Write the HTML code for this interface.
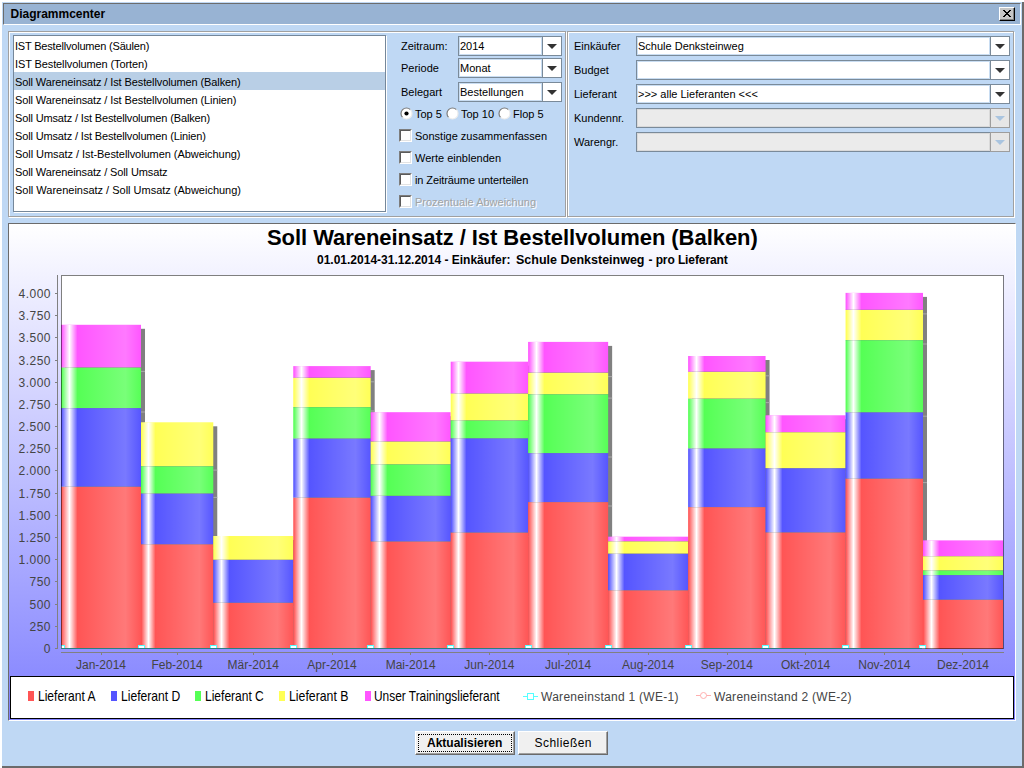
<!DOCTYPE html>
<html><head><meta charset="utf-8">
<style>
html,body{margin:0;padding:0;}
body{width:1024px;height:768px;position:relative;overflow:hidden;background:#fff;font-family:"Liberation Sans", sans-serif;}
.a{position:absolute;}
.t{position:absolute;white-space:pre;font-size:11px;color:#000;line-height:13px;}
.u{margin-top:1px;}
.gb{position:absolute;box-sizing:border-box;border:1px solid #a0a0a0;box-shadow:inset 1px 1px 0 #fff, 1px 1px 0 #fff;}
.combo{position:absolute;height:18px;border:1px solid #7a8a99;background:#fff;}
.combo .btn{position:absolute;right:0;top:0;width:18px;height:18px;border-left:1px solid #7a8a99;background:#fff;}
.combo .arr{position:absolute;left:4px;top:7px;width:0;height:0;border-left:5px solid transparent;border-right:5px solid transparent;border-top:5px solid #333;}
.combo.dis{background:#ebebeb;}
.combo.dis .btn{background:#e6e6e6;top:-1px;right:-1px;border:1px solid #9d9d9d;}
.combo.dis .arr{border-top-color:#a9c4df;}
.cb{position:absolute;width:13px;height:13px;box-sizing:border-box;background:#fff;border-top:1px solid #7d7d7d;border-left:1px solid #7d7d7d;border-right:1px solid #fff;border-bottom:1px solid #fff;}
.cb::after{content:"";position:absolute;left:0;top:0;width:10px;height:10px;border-top:1px solid #5a5a5a;border-left:1px solid #5a5a5a;border-right:1px solid #e3e3e3;border-bottom:1px solid #e3e3e3;}
.cb::after{box-sizing:border-box;width:11px;height:11px;}
</style></head><body>
<div class="a" style="left:2px;top:2px;width:1020px;height:764px;background:#bfd8f4;"></div><div class="a" style="left:1022px;top:2px;width:2px;height:766px;background:#6b6b6b;"></div><div class="a" style="left:2px;top:766px;width:1022px;height:2px;background:#6b6b6b;"></div><div class="a" style="left:3px;top:3px;width:1018px;height:22px;box-sizing:border-box;background:#98b3d3;border-top:1px solid #6c6c6c;border-left:1px solid #6c6c6c;border-right:1px solid #fff;border-bottom:1px solid #fff;"></div><div class="t u" style="left:10.5px;top:6px;font-size:12px;font-weight:bold;line-height:14px;">Diagrammcenter</div><div class="a" style="left:999px;top:7px;width:16px;height:14px;box-sizing:border-box;background:#c6c6c6;border-top:1px solid #fff;border-left:1px solid #fff;border-right:1px solid #000;border-bottom:1px solid #000;"></div><svg class="a" style="left:999px;top:7px" width="16" height="14" shape-rendering="crispEdges"><rect x="14" y="1" width="1" height="12" fill="#808080"/><rect x="1" y="12" width="14" height="1" fill="#808080"/><g fill="#000"><rect x="4" y="3" width="1" height="1"/><rect x="5" y="3" width="1" height="1"/><rect x="10" y="3" width="1" height="1"/><rect x="11" y="3" width="1" height="1"/><rect x="5" y="4" width="1" height="1"/><rect x="6" y="4" width="1" height="1"/><rect x="9" y="4" width="1" height="1"/><rect x="10" y="4" width="1" height="1"/><rect x="6" y="5" width="1" height="1"/><rect x="7" y="5" width="1" height="1"/><rect x="8" y="5" width="1" height="1"/><rect x="9" y="5" width="1" height="1"/><rect x="7" y="6" width="1" height="1"/><rect x="8" y="6" width="1" height="1"/><rect x="6" y="7" width="1" height="1"/><rect x="7" y="7" width="1" height="1"/><rect x="8" y="7" width="1" height="1"/><rect x="9" y="7" width="1" height="1"/><rect x="5" y="8" width="1" height="1"/><rect x="6" y="8" width="1" height="1"/><rect x="9" y="8" width="1" height="1"/><rect x="10" y="8" width="1" height="1"/><rect x="4" y="9" width="1" height="1"/><rect x="5" y="9" width="1" height="1"/><rect x="10" y="9" width="1" height="1"/><rect x="11" y="9" width="1" height="1"/></g></svg><div class="gb" style="left:8px;top:31px;width:558px;height:186px;"></div><div class="gb" style="left:567px;top:31px;width:447px;height:186px;"></div><div class="a" style="left:13px;top:35px;width:373px;height:177px;box-sizing:border-box;background:#fff;border:1px solid #75879a;box-shadow:1px 1px 0 #fff;"></div><div class="t u" style="left:15px;top:39px;letter-spacing:-0.188px;">IST Bestellvolumen (Säulen)</div><div class="t u" style="left:15px;top:57px;letter-spacing:-0.112px;">IST Bestellvolumen (Torten)</div><div class="a" style="left:14px;top:72px;width:371px;height:18px;background:#b9cfe6;"></div><div class="t u" style="left:15px;top:75px;letter-spacing:-0.107px;">Soll Wareneinsatz / Ist Bestellvolumen (Balken)</div><div class="t u" style="left:15px;top:93px;letter-spacing:-0.107px;">Soll Wareneinsatz / Ist Bestellvolumen (Linien)</div><div class="t u" style="left:15px;top:111px;letter-spacing:-0.15px;">Soll Umsatz / Ist Bestellvolumen (Balken)</div><div class="t u" style="left:15px;top:129px;letter-spacing:-0.15px;">Soll Umsatz / Ist Bestellvolumen (Linien)</div><div class="t u" style="left:15px;top:147px;letter-spacing:-0.059px;">Soll Umsatz / Ist-Bestellvolumen (Abweichung)</div><div class="t u" style="left:15px;top:165px;letter-spacing:-0.117px;">Soll Wareneinsatz / Soll Umsatz</div><div class="t u" style="left:15px;top:183px;letter-spacing:-0.01px;">Soll Wareneinsatz / Soll Umsatz (Abweichung)</div><div class="t u" style="left:401px;top:39px;">Zeitraum:</div><div class="t u" style="left:401px;top:61px;">Periode</div><div class="t u" style="left:401px;top:85px;">Belegart</div><div class="combo" style="left:458px;top:36px;width:102px;"><div class="a" style="left:0;top:0;width:83px;height:18px;box-shadow:inset 0 0 0 1px #c9ddf2;"></div><div class="btn"><div class="arr"></div></div><div class="t u" style="left:1px;top:2px;">2014</div></div><div class="combo" style="left:458px;top:58px;width:102px;"><div class="a" style="left:0;top:0;width:83px;height:18px;box-shadow:inset 0 0 0 1px #c9ddf2;"></div><div class="btn"><div class="arr"></div></div><div class="t u" style="left:1px;top:2px;">Monat</div></div><div class="combo" style="left:458px;top:82px;width:102px;"><div class="a" style="left:0;top:0;width:83px;height:18px;box-shadow:inset 0 0 0 1px #c9ddf2;"></div><div class="btn"><div class="arr"></div></div><div class="t u" style="left:1px;top:2px;">Bestellungen</div></div><svg class="a" style="left:400px;top:106.5px" width="13" height="13"><circle cx="6.5" cy="6.5" r="5.5" fill="#fff"/><path d="M2.61 10.39 A5.5 5.5 0 0 1 10.39 2.61" fill="none" stroke="#7d7d7d" stroke-width="1.2"/><path d="M10.39 2.61 A5.5 5.5 0 0 1 2.61 10.39" fill="none" stroke="#ececec" stroke-width="1.2"/><circle cx="6.5" cy="6.5" r="2.1" fill="#000"/></svg><div class="t u" style="left:415px;top:107px;">Top 5</div><svg class="a" style="left:446px;top:106.5px" width="13" height="13"><circle cx="6.5" cy="6.5" r="5.5" fill="#fff"/><path d="M2.61 10.39 A5.5 5.5 0 0 1 10.39 2.61" fill="none" stroke="#7d7d7d" stroke-width="1.2"/><path d="M10.39 2.61 A5.5 5.5 0 0 1 2.61 10.39" fill="none" stroke="#ececec" stroke-width="1.2"/></svg><div class="t u" style="left:461px;top:107px;">Top 10</div><svg class="a" style="left:498px;top:106.5px" width="13" height="13"><circle cx="6.5" cy="6.5" r="5.5" fill="#fff"/><path d="M2.61 10.39 A5.5 5.5 0 0 1 10.39 2.61" fill="none" stroke="#7d7d7d" stroke-width="1.2"/><path d="M10.39 2.61 A5.5 5.5 0 0 1 2.61 10.39" fill="none" stroke="#ececec" stroke-width="1.2"/></svg><div class="t u" style="left:513px;top:107px;">Flop 5</div><div class="cb" style="left:399px;top:129px;"></div><div class="t u" style="left:415px;top:129px;">Sonstige zusammenfassen</div><div class="cb" style="left:399px;top:151px;"></div><div class="t u" style="left:415px;top:151px;">Werte einblenden</div><div class="cb" style="left:399px;top:173px;"></div><div class="t u" style="left:415px;top:173px;letter-spacing:-0.1px;">in Zeiträume unterteilen</div><div class="cb" style="left:399px;top:195px;"></div><div class="t u" style="left:416px;top:196px;color:#fff;">Prozentuale Abweichung</div><div class="t u" style="left:415px;top:195px;color:#a3a3a3;">Prozentuale Abweichung</div><div class="t u" style="left:574px;top:39px;">Einkäufer</div><div class="t u" style="left:574px;top:63px;">Budget</div><div class="t u" style="left:574px;top:87px;">Lieferant</div><div class="t u" style="left:574px;top:111px;">Kundennr.</div><div class="t u" style="left:574px;top:135px;">Warengr.</div><div class="combo" style="left:636px;top:36px;width:372px;"><div class="a" style="left:0;top:0;width:353px;height:18px;box-shadow:inset 0 0 0 1px #c9ddf2;"></div><div class="btn"><div class="arr"></div></div><div class="t u" style="left:1px;top:2px;">Schule Denksteinweg</div></div><div class="combo" style="left:636px;top:60px;width:372px;"><div class="a" style="left:0;top:0;width:353px;height:18px;box-shadow:inset 0 0 0 1px #c9ddf2;"></div><div class="btn"><div class="arr"></div></div></div><div class="combo" style="left:636px;top:84px;width:372px;"><div class="a" style="left:0;top:0;width:353px;height:18px;box-shadow:inset 0 0 0 1px #c9ddf2;"></div><div class="btn"><div class="arr"></div></div><div class="t u" style="left:1px;top:2px;">&gt;&gt;&gt; alle Lieferanten &lt;&lt;&lt;</div></div><div class="combo dis" style="left:636px;top:108px;width:372px;"><div class="a" style="left:0;top:0;width:353px;height:18px;box-shadow:inset 0 0 0 1px #d9d9d9;"></div><div class="btn"><div class="arr"></div></div></div><div class="combo dis" style="left:636px;top:132px;width:372px;"><div class="a" style="left:0;top:0;width:353px;height:18px;box-shadow:inset 0 0 0 1px #d9d9d9;"></div><div class="btn"><div class="arr"></div></div></div><div class="a" style="left:8px;top:223px;width:1008px;height:498px;box-sizing:border-box;border-top:1px solid #6b6b6b;border-left:1px solid #6b6b6b;border-right:1px solid #fff;border-bottom:1px solid #fff;background:linear-gradient(to bottom,#ffffff 0px,#0000ff 1000px);"></div><div class="t" style="left:267px;top:226px;font-size:22px;font-weight:bold;line-height:24px;letter-spacing:-0.05px;">Soll Wareneinsatz / Ist Bestellvolumen (Balken)</div><div class="t" style="left:317px;top:253px;font-size:12px;font-weight:bold;line-height:14px;">01.01.2014-31.12.2014 - Einkäufer:</div><div class="t" style="left:516px;top:253px;font-size:12.5px;font-weight:bold;line-height:14px;">Schule Denksteinweg</div><div class="t" style="left:648.5px;top:253px;font-size:12px;font-weight:bold;line-height:14px;letter-spacing:-0.1px;">- pro Lieferant</div><svg class="a" style="left:0;top:0" width="1024" height="768" viewBox="0 0 1024 768"><defs><linearGradient id="hl0" gradientUnits="userSpaceOnUse" x1="61.500" y1="0" x2="141.505" y2="0"><stop offset="0" stop-color="#fff" stop-opacity="0"/><stop offset="0.1000" stop-color="#fff" stop-opacity="1"/><stop offset="0.2000" stop-color="#fff" stop-opacity="0"/><stop offset="0.7999" stop-color="#fff" stop-opacity="0.2118"/><stop offset="1" stop-color="#fff" stop-opacity="0"/></linearGradient><linearGradient id="hl1" gradientUnits="userSpaceOnUse" x1="141.505" y1="0" x2="213.768" y2="0"><stop offset="0" stop-color="#fff" stop-opacity="0"/><stop offset="0.0968" stop-color="#fff" stop-opacity="1"/><stop offset="0.1937" stop-color="#fff" stop-opacity="0"/><stop offset="0.8025" stop-color="#fff" stop-opacity="0.2118"/><stop offset="1" stop-color="#fff" stop-opacity="0"/></linearGradient><linearGradient id="hl2" gradientUnits="userSpaceOnUse" x1="213.768" y1="0" x2="293.774" y2="0"><stop offset="0" stop-color="#fff" stop-opacity="0"/><stop offset="0.0966" stop-color="#fff" stop-opacity="1"/><stop offset="0.1966" stop-color="#fff" stop-opacity="0"/><stop offset="0.7966" stop-color="#fff" stop-opacity="0.2118"/><stop offset="1" stop-color="#fff" stop-opacity="0"/></linearGradient><linearGradient id="hl3" gradientUnits="userSpaceOnUse" x1="293.774" y1="0" x2="371.199" y2="0"><stop offset="0" stop-color="#fff" stop-opacity="0"/><stop offset="0.0998" stop-color="#fff" stop-opacity="1"/><stop offset="0.2031" stop-color="#fff" stop-opacity="0"/><stop offset="0.7972" stop-color="#fff" stop-opacity="0.2118"/><stop offset="1" stop-color="#fff" stop-opacity="0"/></linearGradient><linearGradient id="hl4" gradientUnits="userSpaceOnUse" x1="371.199" y1="0" x2="451.204" y2="0"><stop offset="0" stop-color="#fff" stop-opacity="0"/><stop offset="0.1038" stop-color="#fff" stop-opacity="1"/><stop offset="0.2038" stop-color="#fff" stop-opacity="0"/><stop offset="0.8037" stop-color="#fff" stop-opacity="0.2118"/><stop offset="1" stop-color="#fff" stop-opacity="0"/></linearGradient><linearGradient id="hl5" gradientUnits="userSpaceOnUse" x1="451.204" y1="0" x2="528.629" y2="0"><stop offset="0" stop-color="#fff" stop-opacity="0"/><stop offset="0.0942" stop-color="#fff" stop-opacity="1"/><stop offset="0.1976" stop-color="#fff" stop-opacity="0"/><stop offset="0.8046" stop-color="#fff" stop-opacity="0.2118"/><stop offset="1" stop-color="#fff" stop-opacity="0"/></linearGradient><linearGradient id="hl6" gradientUnits="userSpaceOnUse" x1="528.629" y1="0" x2="608.634" y2="0"><stop offset="0" stop-color="#fff" stop-opacity="0"/><stop offset="0.0984" stop-color="#fff" stop-opacity="1"/><stop offset="0.1984" stop-color="#fff" stop-opacity="0"/><stop offset="0.7983" stop-color="#fff" stop-opacity="0.2118"/><stop offset="1" stop-color="#fff" stop-opacity="0"/></linearGradient><linearGradient id="hl7" gradientUnits="userSpaceOnUse" x1="608.634" y1="0" x2="688.640" y2="0"><stop offset="0" stop-color="#fff" stop-opacity="0"/><stop offset="0.0983" stop-color="#fff" stop-opacity="1"/><stop offset="0.1983" stop-color="#fff" stop-opacity="0"/><stop offset="0.7983" stop-color="#fff" stop-opacity="0.2118"/><stop offset="1" stop-color="#fff" stop-opacity="0"/></linearGradient><linearGradient id="hl8" gradientUnits="userSpaceOnUse" x1="688.640" y1="0" x2="766.064" y2="0"><stop offset="0" stop-color="#fff" stop-opacity="0"/><stop offset="0.1015" stop-color="#fff" stop-opacity="1"/><stop offset="0.2048" stop-color="#fff" stop-opacity="0"/><stop offset="0.7990" stop-color="#fff" stop-opacity="0.2118"/><stop offset="1" stop-color="#fff" stop-opacity="0"/></linearGradient><linearGradient id="hl9" gradientUnits="userSpaceOnUse" x1="766.064" y1="0" x2="846.070" y2="0"><stop offset="0" stop-color="#fff" stop-opacity="0"/><stop offset="0.1054" stop-color="#fff" stop-opacity="1"/><stop offset="0.2054" stop-color="#fff" stop-opacity="0"/><stop offset="0.8054" stop-color="#fff" stop-opacity="0.2118"/><stop offset="1" stop-color="#fff" stop-opacity="0"/></linearGradient><linearGradient id="hl10" gradientUnits="userSpaceOnUse" x1="846.070" y1="0" x2="923.495" y2="0"><stop offset="0" stop-color="#fff" stop-opacity="0"/><stop offset="0.0960" stop-color="#fff" stop-opacity="1"/><stop offset="0.1993" stop-color="#fff" stop-opacity="0"/><stop offset="0.8063" stop-color="#fff" stop-opacity="0.2118"/><stop offset="1" stop-color="#fff" stop-opacity="0"/></linearGradient><linearGradient id="hl11" gradientUnits="userSpaceOnUse" x1="923.495" y1="0" x2="1003.500" y2="0"><stop offset="0" stop-color="#fff" stop-opacity="0"/><stop offset="0.1001" stop-color="#fff" stop-opacity="1"/><stop offset="0.2001" stop-color="#fff" stop-opacity="0"/><stop offset="0.8000" stop-color="#fff" stop-opacity="0.2118"/><stop offset="1" stop-color="#fff" stop-opacity="0"/></linearGradient></defs><rect x="61" y="275" width="942" height="373" fill="#fff"/><clipPath id="pc0"><rect x="61" y="275" width="942" height="374"/></clipPath><g clip-path="url(#pc0)"><rect x="65.00" y="328.80" width="80.01" height="320.20" fill="#808080"/><rect x="145.01" y="426.30" width="72.26" height="222.70" fill="#808080"/><rect x="217.27" y="540.00" width="80.01" height="109.00" fill="#808080"/><rect x="297.27" y="370.10" width="77.42" height="278.90" fill="#808080"/><rect x="374.70" y="416.20" width="80.01" height="232.80" fill="#808080"/><rect x="454.70" y="365.70" width="77.42" height="283.30" fill="#808080"/><rect x="532.13" y="345.90" width="80.01" height="303.10" fill="#808080"/><rect x="612.13" y="540.70" width="80.01" height="108.30" fill="#808080"/><rect x="692.14" y="360.00" width="77.42" height="289.00" fill="#808080"/><rect x="769.56" y="419.30" width="80.01" height="229.70" fill="#808080"/><rect x="849.57" y="296.90" width="77.42" height="352.10" fill="#808080"/><rect x="926.99" y="544.40" width="80.01" height="104.60" fill="#808080"/><rect x="141.01" y="370.90" width="4" height="1" fill="#a9a9a9"/><rect x="141.01" y="411.50" width="4" height="1" fill="#a9a9a9"/><rect x="141.01" y="490.20" width="4" height="1" fill="#a9a9a9"/><rect x="213.27" y="469.60" width="4" height="1" fill="#a9a9a9"/><rect x="213.27" y="496.90" width="4" height="1" fill="#a9a9a9"/><rect x="213.27" y="547.70" width="4" height="1" fill="#a9a9a9"/><rect x="293.27" y="563.30" width="4" height="1" fill="#a9a9a9"/><rect x="293.27" y="606.30" width="4" height="1" fill="#a9a9a9"/><rect x="370.70" y="381.30" width="4" height="1" fill="#a9a9a9"/><rect x="370.70" y="410.50" width="4" height="1" fill="#a9a9a9"/><rect x="370.70" y="441.90" width="4" height="1" fill="#a9a9a9"/><rect x="370.70" y="501.10" width="4" height="1" fill="#a9a9a9"/><rect x="450.70" y="444.90" width="4" height="1" fill="#a9a9a9"/><rect x="450.70" y="467.70" width="4" height="1" fill="#a9a9a9"/><rect x="450.70" y="499.40" width="4" height="1" fill="#a9a9a9"/><rect x="450.70" y="544.90" width="4" height="1" fill="#a9a9a9"/><rect x="528.13" y="396.90" width="4" height="1" fill="#a9a9a9"/><rect x="528.13" y="423.80" width="4" height="1" fill="#a9a9a9"/><rect x="528.13" y="441.70" width="4" height="1" fill="#a9a9a9"/><rect x="528.13" y="536.00" width="4" height="1" fill="#a9a9a9"/><rect x="608.13" y="376.10" width="4" height="1" fill="#a9a9a9"/><rect x="608.13" y="397.60" width="4" height="1" fill="#a9a9a9"/><rect x="608.13" y="456.50" width="4" height="1" fill="#a9a9a9"/><rect x="608.13" y="505.50" width="4" height="1" fill="#a9a9a9"/><rect x="688.14" y="544.70" width="4" height="1" fill="#a9a9a9"/><rect x="688.14" y="557.10" width="4" height="1" fill="#a9a9a9"/><rect x="688.14" y="593.70" width="4" height="1" fill="#a9a9a9"/><rect x="765.56" y="375.30" width="4" height="1" fill="#a9a9a9"/><rect x="765.56" y="402.10" width="4" height="1" fill="#a9a9a9"/><rect x="765.56" y="451.80" width="4" height="1" fill="#a9a9a9"/><rect x="765.56" y="510.50" width="4" height="1" fill="#a9a9a9"/><rect x="845.57" y="435.60" width="4" height="1" fill="#a9a9a9"/><rect x="845.57" y="471.60" width="4" height="1" fill="#a9a9a9"/><rect x="845.57" y="535.80" width="4" height="1" fill="#a9a9a9"/><rect x="922.99" y="313.40" width="4" height="1" fill="#a9a9a9"/><rect x="922.99" y="343.50" width="4" height="1" fill="#a9a9a9"/><rect x="922.99" y="415.70" width="4" height="1" fill="#a9a9a9"/><rect x="922.99" y="482.10" width="4" height="1" fill="#a9a9a9"/><rect x="1003.00" y="559.60" width="4" height="1" fill="#a9a9a9"/><rect x="1003.00" y="573.80" width="4" height="1" fill="#a9a9a9"/><rect x="1003.00" y="578.50" width="4" height="1" fill="#a9a9a9"/><rect x="1003.00" y="603.20" width="4" height="1" fill="#a9a9a9"/><rect x="61.00" y="486.70" width="80.01" height="162.30" fill="#ff5555"/><rect x="61.00" y="408.00" width="80.01" height="78.70" fill="#5555ff"/><rect x="61.00" y="367.40" width="80.01" height="40.60" fill="#55ff55"/><rect x="61.00" y="324.80" width="80.01" height="42.60" fill="#ff55ff"/><rect x="61.00" y="324.80" width="80.01" height="324.20" fill="url(#hl0)"/><rect x="61.00" y="486" width="80.01" height="1" fill="#808080" fill-opacity="0.22"/><rect x="61.00" y="408" width="80.01" height="1" fill="#808080" fill-opacity="0.22"/><rect x="61.00" y="367" width="80.01" height="1" fill="#808080" fill-opacity="0.22"/><rect x="141.01" y="544.20" width="72.26" height="104.80" fill="#ff5555"/><rect x="141.01" y="493.40" width="72.26" height="50.80" fill="#5555ff"/><rect x="141.01" y="466.10" width="72.26" height="27.30" fill="#55ff55"/><rect x="141.01" y="422.30" width="72.26" height="43.80" fill="#ffff55"/><rect x="141.01" y="422.30" width="72.26" height="226.70" fill="url(#hl1)"/><rect x="141.01" y="544" width="72.26" height="1" fill="#808080" fill-opacity="0.22"/><rect x="141.01" y="493" width="72.26" height="1" fill="#808080" fill-opacity="0.22"/><rect x="141.01" y="466" width="72.26" height="1" fill="#808080" fill-opacity="0.22"/><rect x="213.27" y="602.80" width="80.01" height="46.20" fill="#ff5555"/><rect x="213.27" y="559.80" width="80.01" height="43.00" fill="#5555ff"/><rect x="213.27" y="536.00" width="80.01" height="23.80" fill="#ffff55"/><rect x="213.27" y="536.00" width="80.01" height="113.00" fill="url(#hl2)"/><rect x="213.27" y="602" width="80.01" height="1" fill="#808080" fill-opacity="0.22"/><rect x="213.27" y="559" width="80.01" height="1" fill="#808080" fill-opacity="0.22"/><rect x="293.27" y="497.60" width="77.42" height="151.40" fill="#ff5555"/><rect x="293.27" y="438.40" width="77.42" height="59.20" fill="#5555ff"/><rect x="293.27" y="407.00" width="77.42" height="31.40" fill="#55ff55"/><rect x="293.27" y="377.80" width="77.42" height="29.20" fill="#ffff55"/><rect x="293.27" y="366.10" width="77.42" height="11.70" fill="#ff55ff"/><rect x="293.27" y="366.10" width="77.42" height="282.90" fill="url(#hl3)"/><rect x="293.27" y="497" width="77.42" height="1" fill="#808080" fill-opacity="0.22"/><rect x="293.27" y="438" width="77.42" height="1" fill="#808080" fill-opacity="0.22"/><rect x="293.27" y="407" width="77.42" height="1" fill="#808080" fill-opacity="0.22"/><rect x="293.27" y="377" width="77.42" height="1" fill="#808080" fill-opacity="0.22"/><rect x="370.70" y="541.40" width="80.01" height="107.60" fill="#ff5555"/><rect x="370.70" y="495.90" width="80.01" height="45.50" fill="#5555ff"/><rect x="370.70" y="464.20" width="80.01" height="31.70" fill="#55ff55"/><rect x="370.70" y="441.40" width="80.01" height="22.80" fill="#ffff55"/><rect x="370.70" y="412.20" width="80.01" height="29.20" fill="#ff55ff"/><rect x="370.70" y="412.20" width="80.01" height="236.80" fill="url(#hl4)"/><rect x="370.70" y="541" width="80.01" height="1" fill="#808080" fill-opacity="0.22"/><rect x="370.70" y="495" width="80.01" height="1" fill="#808080" fill-opacity="0.22"/><rect x="370.70" y="464" width="80.01" height="1" fill="#808080" fill-opacity="0.22"/><rect x="370.70" y="441" width="80.01" height="1" fill="#808080" fill-opacity="0.22"/><rect x="450.70" y="532.50" width="77.42" height="116.50" fill="#ff5555"/><rect x="450.70" y="438.20" width="77.42" height="94.30" fill="#5555ff"/><rect x="450.70" y="420.30" width="77.42" height="17.90" fill="#55ff55"/><rect x="450.70" y="393.40" width="77.42" height="26.90" fill="#ffff55"/><rect x="450.70" y="361.70" width="77.42" height="31.70" fill="#ff55ff"/><rect x="450.70" y="361.70" width="77.42" height="287.30" fill="url(#hl5)"/><rect x="450.70" y="532" width="77.42" height="1" fill="#808080" fill-opacity="0.22"/><rect x="450.70" y="438" width="77.42" height="1" fill="#808080" fill-opacity="0.22"/><rect x="450.70" y="420" width="77.42" height="1" fill="#808080" fill-opacity="0.22"/><rect x="450.70" y="393" width="77.42" height="1" fill="#808080" fill-opacity="0.22"/><rect x="528.13" y="502.00" width="80.01" height="147.00" fill="#ff5555"/><rect x="528.13" y="453.00" width="80.01" height="49.00" fill="#5555ff"/><rect x="528.13" y="394.10" width="80.01" height="58.90" fill="#55ff55"/><rect x="528.13" y="372.60" width="80.01" height="21.50" fill="#ffff55"/><rect x="528.13" y="341.90" width="80.01" height="30.70" fill="#ff55ff"/><rect x="528.13" y="341.90" width="80.01" height="307.10" fill="url(#hl6)"/><rect x="528.13" y="502" width="80.01" height="1" fill="#808080" fill-opacity="0.22"/><rect x="528.13" y="453" width="80.01" height="1" fill="#808080" fill-opacity="0.22"/><rect x="528.13" y="394" width="80.01" height="1" fill="#808080" fill-opacity="0.22"/><rect x="528.13" y="372" width="80.01" height="1" fill="#808080" fill-opacity="0.22"/><rect x="608.13" y="590.20" width="80.01" height="58.80" fill="#ff5555"/><rect x="608.13" y="553.60" width="80.01" height="36.60" fill="#5555ff"/><rect x="608.13" y="541.20" width="80.01" height="12.40" fill="#ffff55"/><rect x="608.13" y="536.70" width="80.01" height="4.50" fill="#ff55ff"/><rect x="608.13" y="536.70" width="80.01" height="112.30" fill="url(#hl7)"/><rect x="608.13" y="590" width="80.01" height="1" fill="#808080" fill-opacity="0.22"/><rect x="608.13" y="553" width="80.01" height="1" fill="#808080" fill-opacity="0.22"/><rect x="608.13" y="541" width="80.01" height="1" fill="#808080" fill-opacity="0.22"/><rect x="688.14" y="507.00" width="77.42" height="142.00" fill="#ff5555"/><rect x="688.14" y="448.30" width="77.42" height="58.70" fill="#5555ff"/><rect x="688.14" y="398.60" width="77.42" height="49.70" fill="#55ff55"/><rect x="688.14" y="371.80" width="77.42" height="26.80" fill="#ffff55"/><rect x="688.14" y="356.00" width="77.42" height="15.80" fill="#ff55ff"/><rect x="688.14" y="356.00" width="77.42" height="293.00" fill="url(#hl8)"/><rect x="688.14" y="507" width="77.42" height="1" fill="#808080" fill-opacity="0.22"/><rect x="688.14" y="448" width="77.42" height="1" fill="#808080" fill-opacity="0.22"/><rect x="688.14" y="398" width="77.42" height="1" fill="#808080" fill-opacity="0.22"/><rect x="688.14" y="371" width="77.42" height="1" fill="#808080" fill-opacity="0.22"/><rect x="765.56" y="532.30" width="80.01" height="116.70" fill="#ff5555"/><rect x="765.56" y="468.10" width="80.01" height="64.20" fill="#5555ff"/><rect x="765.56" y="432.10" width="80.01" height="36.00" fill="#ffff55"/><rect x="765.56" y="415.30" width="80.01" height="16.80" fill="#ff55ff"/><rect x="765.56" y="415.30" width="80.01" height="233.70" fill="url(#hl9)"/><rect x="765.56" y="532" width="80.01" height="1" fill="#808080" fill-opacity="0.22"/><rect x="765.56" y="468" width="80.01" height="1" fill="#808080" fill-opacity="0.22"/><rect x="765.56" y="432" width="80.01" height="1" fill="#808080" fill-opacity="0.22"/><rect x="845.57" y="478.60" width="77.42" height="170.40" fill="#ff5555"/><rect x="845.57" y="412.20" width="77.42" height="66.40" fill="#5555ff"/><rect x="845.57" y="340.00" width="77.42" height="72.20" fill="#55ff55"/><rect x="845.57" y="309.90" width="77.42" height="30.10" fill="#ffff55"/><rect x="845.57" y="292.90" width="77.42" height="17.00" fill="#ff55ff"/><rect x="845.57" y="292.90" width="77.42" height="356.10" fill="url(#hl10)"/><rect x="845.57" y="478" width="77.42" height="1" fill="#808080" fill-opacity="0.22"/><rect x="845.57" y="412" width="77.42" height="1" fill="#808080" fill-opacity="0.22"/><rect x="845.57" y="340" width="77.42" height="1" fill="#808080" fill-opacity="0.22"/><rect x="845.57" y="309" width="77.42" height="1" fill="#808080" fill-opacity="0.22"/><rect x="922.99" y="599.70" width="80.01" height="49.30" fill="#ff5555"/><rect x="922.99" y="575.00" width="80.01" height="24.70" fill="#5555ff"/><rect x="922.99" y="570.30" width="80.01" height="4.70" fill="#55ff55"/><rect x="922.99" y="556.10" width="80.01" height="14.20" fill="#ffff55"/><rect x="922.99" y="540.40" width="80.01" height="15.70" fill="#ff55ff"/><rect x="922.99" y="540.40" width="80.01" height="108.60" fill="url(#hl11)"/><rect x="922.99" y="599" width="80.01" height="1" fill="#808080" fill-opacity="0.22"/><rect x="922.99" y="575" width="80.01" height="1" fill="#808080" fill-opacity="0.22"/><rect x="922.99" y="570" width="80.01" height="1" fill="#808080" fill-opacity="0.22"/><rect x="922.99" y="556" width="80.01" height="1" fill="#808080" fill-opacity="0.22"/></g><clipPath id="pc"><rect x="61" y="275" width="942" height="374"/></clipPath><g clip-path="url(#pc)"><rect x="58.50" y="645.5" width="6" height="6" fill="#fff" stroke="#55ffff" stroke-width="1"/><rect x="138.50" y="645.5" width="6" height="6" fill="#fff" stroke="#55ffff" stroke-width="1"/><rect x="210.50" y="645.5" width="6" height="6" fill="#fff" stroke="#55ffff" stroke-width="1"/><rect x="290.50" y="645.5" width="6" height="6" fill="#fff" stroke="#55ffff" stroke-width="1"/><rect x="367.50" y="645.5" width="6" height="6" fill="#fff" stroke="#55ffff" stroke-width="1"/><rect x="447.50" y="645.5" width="6" height="6" fill="#fff" stroke="#55ffff" stroke-width="1"/><rect x="525.50" y="645.5" width="6" height="6" fill="#fff" stroke="#55ffff" stroke-width="1"/><rect x="605.50" y="645.5" width="6" height="6" fill="#fff" stroke="#55ffff" stroke-width="1"/><rect x="685.50" y="645.5" width="6" height="6" fill="#fff" stroke="#55ffff" stroke-width="1"/><rect x="762.50" y="645.5" width="6" height="6" fill="#fff" stroke="#55ffff" stroke-width="1"/><rect x="842.50" y="645.5" width="6" height="6" fill="#fff" stroke="#55ffff" stroke-width="1"/><rect x="919.50" y="645.5" width="6" height="6" fill="#fff" stroke="#55ffff" stroke-width="1"/></g><rect x="61" y="648" width="861" height="1" fill="#55ffff"/><g fill="#000" fill-opacity="0.5"><rect x="61" y="275" width="942" height="1"/><rect x="61" y="648" width="942" height="1"/><rect x="61" y="276" width="1" height="372"/><rect x="1003" y="275" width="1" height="374"/></g><rect x="57" y="275" width="1" height="374" fill="#808080"/><rect x="55" y="648" width="2" height="1" fill="#808080"/><rect x="55" y="626" width="2" height="1" fill="#808080"/><rect x="55" y="604" width="2" height="1" fill="#808080"/><rect x="55" y="581" width="2" height="1" fill="#808080"/><rect x="55" y="559" width="2" height="1" fill="#808080"/><rect x="55" y="537" width="2" height="1" fill="#808080"/><rect x="55" y="515" width="2" height="1" fill="#808080"/><rect x="55" y="493" width="2" height="1" fill="#808080"/><rect x="55" y="470" width="2" height="1" fill="#808080"/><rect x="55" y="448" width="2" height="1" fill="#808080"/><rect x="55" y="426" width="2" height="1" fill="#808080"/><rect x="55" y="404" width="2" height="1" fill="#808080"/><rect x="55" y="382" width="2" height="1" fill="#808080"/><rect x="55" y="360" width="2" height="1" fill="#808080"/><rect x="55" y="337" width="2" height="1" fill="#808080"/><rect x="55" y="315" width="2" height="1" fill="#808080"/><rect x="55" y="293" width="2" height="1" fill="#808080"/><rect x="61" y="652" width="943" height="1" fill="#808080"/><rect x="101" y="653" width="1" height="2" fill="#808080"/><rect x="177" y="653" width="1" height="2" fill="#808080"/><rect x="253" y="653" width="1" height="2" fill="#808080"/><rect x="332" y="653" width="1" height="2" fill="#808080"/><rect x="410" y="653" width="1" height="2" fill="#808080"/><rect x="489" y="653" width="1" height="2" fill="#808080"/><rect x="568" y="653" width="1" height="2" fill="#808080"/><rect x="648" y="653" width="1" height="2" fill="#808080"/><rect x="727" y="653" width="1" height="2" fill="#808080"/><rect x="805" y="653" width="1" height="2" fill="#808080"/><rect x="884" y="653" width="1" height="2" fill="#808080"/><rect x="962" y="653" width="1" height="2" fill="#808080"/></svg><div class="t" style="left:0px;width:51px;text-align:right;top:642px;font-size:12px;line-height:14px;color:#444;letter-spacing:0.5px;">0</div><div class="t" style="left:0px;width:51px;text-align:right;top:620px;font-size:12px;line-height:14px;color:#444;letter-spacing:0.5px;">250</div><div class="t" style="left:0px;width:51px;text-align:right;top:598px;font-size:12px;line-height:14px;color:#444;letter-spacing:0.5px;">500</div><div class="t" style="left:0px;width:51px;text-align:right;top:575px;font-size:12px;line-height:14px;color:#444;letter-spacing:0.5px;">750</div><div class="t" style="left:0px;width:51px;text-align:right;top:553px;font-size:12px;line-height:14px;color:#444;letter-spacing:0.5px;">1.000</div><div class="t" style="left:0px;width:51px;text-align:right;top:531px;font-size:12px;line-height:14px;color:#444;letter-spacing:0.5px;">1.250</div><div class="t" style="left:0px;width:51px;text-align:right;top:509px;font-size:12px;line-height:14px;color:#444;letter-spacing:0.5px;">1.500</div><div class="t" style="left:0px;width:51px;text-align:right;top:487px;font-size:12px;line-height:14px;color:#444;letter-spacing:0.5px;">1.750</div><div class="t" style="left:0px;width:51px;text-align:right;top:464px;font-size:12px;line-height:14px;color:#444;letter-spacing:0.5px;">2.000</div><div class="t" style="left:0px;width:51px;text-align:right;top:442px;font-size:12px;line-height:14px;color:#444;letter-spacing:0.5px;">2.250</div><div class="t" style="left:0px;width:51px;text-align:right;top:420px;font-size:12px;line-height:14px;color:#444;letter-spacing:0.5px;">2.500</div><div class="t" style="left:0px;width:51px;text-align:right;top:398px;font-size:12px;line-height:14px;color:#444;letter-spacing:0.5px;">2.750</div><div class="t" style="left:0px;width:51px;text-align:right;top:376px;font-size:12px;line-height:14px;color:#444;letter-spacing:0.5px;">3.000</div><div class="t" style="left:0px;width:51px;text-align:right;top:354px;font-size:12px;line-height:14px;color:#444;letter-spacing:0.5px;">3.250</div><div class="t" style="left:0px;width:51px;text-align:right;top:331px;font-size:12px;line-height:14px;color:#444;letter-spacing:0.5px;">3.500</div><div class="t" style="left:0px;width:51px;text-align:right;top:309px;font-size:12px;line-height:14px;color:#444;letter-spacing:0.5px;">3.750</div><div class="t" style="left:0px;width:51px;text-align:right;top:287px;font-size:12px;line-height:14px;color:#444;letter-spacing:0.5px;">4.000</div><div class="t" style="left:61.0px;width:80px;text-align:center;top:658px;font-size:12px;line-height:14px;color:#444;">Jan-2014</div><div class="t" style="left:137.1px;width:80px;text-align:center;top:658px;font-size:12px;line-height:14px;color:#444;">Feb-2014</div><div class="t" style="left:213.3px;width:80px;text-align:center;top:658px;font-size:12px;line-height:14px;color:#444;">Mär-2014</div><div class="t" style="left:292.0px;width:80px;text-align:center;top:658px;font-size:12px;line-height:14px;color:#444;">Apr-2014</div><div class="t" style="left:370.7px;width:80px;text-align:center;top:658px;font-size:12px;line-height:14px;color:#444;">Mai-2014</div><div class="t" style="left:449.4px;width:80px;text-align:center;top:658px;font-size:12px;line-height:14px;color:#444;">Jun-2014</div><div class="t" style="left:528.1px;width:80px;text-align:center;top:658px;font-size:12px;line-height:14px;color:#444;">Jul-2014</div><div class="t" style="left:608.1px;width:80px;text-align:center;top:658px;font-size:12px;line-height:14px;color:#444;">Aug-2014</div><div class="t" style="left:686.9px;width:80px;text-align:center;top:658px;font-size:12px;line-height:14px;color:#444;">Sep-2014</div><div class="t" style="left:765.6px;width:80px;text-align:center;top:658px;font-size:12px;line-height:14px;color:#444;">Okt-2014</div><div class="t" style="left:844.3px;width:80px;text-align:center;top:658px;font-size:12px;line-height:14px;color:#444;">Nov-2014</div><div class="t" style="left:923.0px;width:80px;text-align:center;top:658px;font-size:12px;line-height:14px;color:#444;">Dez-2014</div><div class="a" style="left:10px;top:676px;width:1004px;height:43px;box-sizing:border-box;border:1px solid #000;background:#fff;"></div><div class="a" style="left:28px;top:691px;width:6px;height:10px;background:#ff5555;"></div><div class="t" style="left:37.5px;top:689px;font-size:14.5px;line-height:14px;transform-origin:0 0;transform:scaleX(0.83);">Lieferant A</div><div class="a" style="left:111px;top:691px;width:6px;height:10px;background:#5555ff;"></div><div class="t" style="left:121px;top:689px;font-size:14.5px;line-height:14px;transform-origin:0 0;transform:scaleX(0.834);">Lieferant D</div><div class="a" style="left:195px;top:691px;width:6px;height:10px;background:#55ff55;"></div><div class="t" style="left:205px;top:689px;font-size:14.5px;line-height:14px;transform-origin:0 0;transform:scaleX(0.829);">Lieferant C</div><div class="a" style="left:279px;top:691px;width:6px;height:10px;background:#ffff55;"></div><div class="t" style="left:288.5px;top:689px;font-size:14.5px;line-height:14px;transform-origin:0 0;transform:scaleX(0.847);">Lieferant B</div><div class="a" style="left:365px;top:691px;width:6px;height:10px;background:#ff55ff;"></div><div class="t" style="left:373.5px;top:689px;font-size:14.5px;line-height:14px;transform-origin:0 0;transform:scaleX(0.82);">Unser Trainingslieferant</div><svg class="a" style="left:520px;top:688px" width="200" height="16"><rect x="3" y="8" width="15" height="1" fill="#55ffff"/><rect x="7.5" y="5.5" width="6" height="6" fill="#fff" stroke="#55ffff"/><rect x="176" y="7" width="15" height="1" fill="#ffafaf"/><circle cx="183.5" cy="7.5" r="3" fill="#fff" stroke="#ffafaf"/></svg><div class="t" style="left:541px;top:690px;font-size:12px;line-height:14px;color:#444;letter-spacing:0.28px;">Wareneinstand 1 (WE-1)</div><div class="t" style="left:714px;top:690px;font-size:12px;line-height:14px;color:#444;letter-spacing:0.28px;">Wareneinstand 2 (WE-2)</div><div class="a" style="left:415px;top:731px;width:100px;height:24px;box-sizing:border-box;background:#f0f0f0;border-top:1px solid #fff;border-left:1px solid #fff;border-right:1px solid #6a6a6a;border-bottom:1px solid #6a6a6a;box-shadow:inset -1px -1px 0 #a0a0a0;"></div><div class="a" style="left:418px;top:734px;width:94px;height:18px;box-sizing:border-box;border:1px dotted #000;"></div><div class="t" style="left:427px;top:737px;font-size:12px;font-weight:bold;">Aktualisieren</div><div class="a" style="left:518px;top:731px;width:90px;height:24px;box-sizing:border-box;background:#f0f0f0;border-top:1px solid #fff;border-left:1px solid #fff;border-right:1px solid #6a6a6a;border-bottom:1px solid #6a6a6a;box-shadow:inset -1px -1px 0 #a0a0a0;"></div><div class="t" style="left:534.5px;top:737px;font-size:12px;letter-spacing:0.45px;">Schließen</div></body></html>
